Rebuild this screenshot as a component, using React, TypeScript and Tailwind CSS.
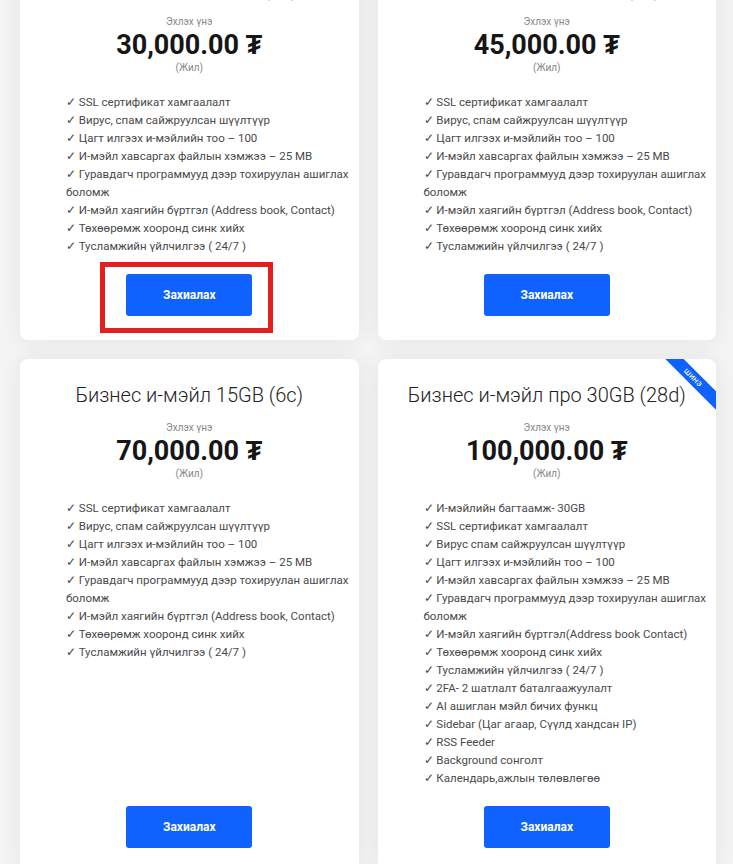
import React from "react";

type Plan = {
  title: string;
  price: string;
  features: string[];
  ribbon?: boolean;
  highlight?: boolean;
};

const base = [
  "SSL сертификат хамгаалалт",
  "Вирус, спам сайжруулсан шүүлтүүр",
  "Цагт илгээх и-мэйлийн тоо – 100",
  "И-мэйл хавсаргах файлын хэмжээ – 25 MB",
  "Гуравдагч программууд дээр тохируулан ашиглах боломж",
  "И-мэйл хаягийн бүртгэл (Address book, Contact)",
  "Төхөөрөмж хооронд синк хийх",
  "Тусламжийн үйлчилгээ ( 24/7 )",
];

const plans: Plan[] = [
  { title: "Бизнес и-мэйл 5GB (2с)", price: "30,000.00", features: base, highlight: true },
  { title: "Бизнес и-мэйл 10GB (4с)", price: "45,000.00", features: base },
  { title: "Бизнес и-мэйл 15GB (6с)", price: "70,000.00", features: base },
  {
    title: "Бизнес и-мэйл про 30GB (28d)",
    price: "100,000.00",
    ribbon: true,
    features: [
      "И-мэйлийн багтаамж- 30GB",
      "SSL сертификат хамгаалалт",
      "Вирус спам сайжруулсан шүүлтүүр",
      "Цагт илгээх и-мэйлийн тоо – 100",
      "И-мэйл хавсаргах файлын хэмжээ – 25 MB",
      "Гуравдагч программууд дээр тохируулан ашиглах боломж",
      "И-мэйл хаягийн бүртгэл(Address book Contact)",
      "Төхөөрөмж хооронд синк хийх",
      "Тусламжийн үйлчилгээ ( 24/7 )",
      "2FA- 2 шатлалт баталгаажуулалт",
      "AI ашиглан мэйл бичих функц",
      "Sidebar (Цаг агаар, Сүүлд хандсан IP)",
      "RSS Feeder",
      "Background сонголт",
      "Календарь,ажлын төлөвлөгөө",
    ],
  },
];

function PlanCard({ plan }: { plan: Plan }) {
  return (
    <div className="relative flex flex-col bg-white rounded-lg shadow-[0_0_22px_rgba(0,0,0,0.07)] pt-[22px] pb-[24px]">
      {plan.ribbon && (
        <div className="absolute top-0 right-0 w-[60px] h-[60px] overflow-hidden rounded-tr-lg">
          <div className="absolute top-[12px] right-[-22px] w-[90px] h-[13px] rotate-45 bg-[#1062fe] text-white text-[9px] leading-[13px] text-center">
            шинэ
          </div>
        </div>
      )}
      <h3 className="text-center text-[20px] leading-[28px] font-light text-[#222]">{plan.title}</h3>
      <div className="mt-[13px] text-center text-[10px] leading-[12px] text-[#888]">Эхлэх үнэ</div>
      <div className="text-center text-[27px] leading-[34px] font-bold text-[#161616]">{plan.price} ₮</div>
      <div className="text-center text-[10px] leading-[12px] text-[#888]">(Жил)</div>
      <ul className="mt-[19px] pl-[46px] pr-[6px] text-[11.5px] leading-[18px] text-[#4a4a4a]">
        {plan.features.map((f) => (
          <li key={f}>✓ {f}</li>
        ))}
      </ul>
      <div className="mt-auto pt-[19px] flex justify-center">
        <div className="relative">
          <button className="w-[126px] h-[42px] rounded-[3px] bg-[#1062fe] text-white text-[12px] font-bold">
            Захиалах
          </button>
          {plan.highlight && (
            <div className="absolute top-[-12px] bottom-[-17px] left-[-26px] right-[-21px] border-[5px] border-[#e41e1e]" />
          )}
        </div>
      </div>
    </div>
  );
}

export default function App() {
  return (
    <div className="h-[864px] overflow-hidden bg-[#f4f4f4] font-['Roboto',sans-serif]">
      <div className="mt-[-47px] grid grid-cols-2 gap-[19px] pl-[20px] pr-[17px]">
        {plans.map((p) => (
          <PlanCard key={p.title} plan={p} />
        ))}
      </div>
    </div>
  );
}
